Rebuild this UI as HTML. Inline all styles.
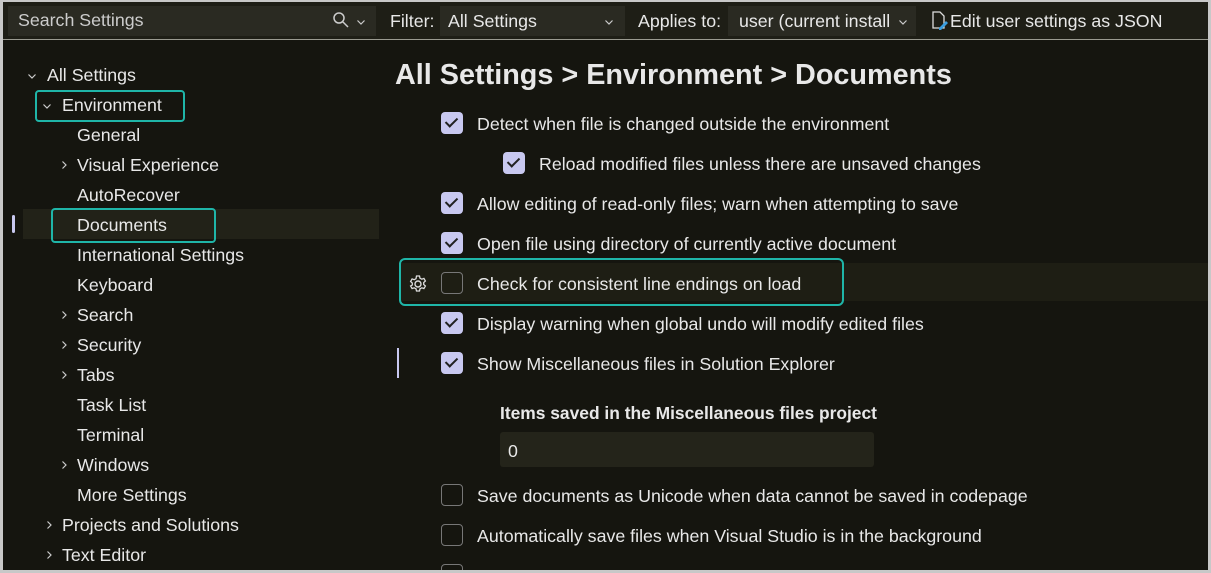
<!DOCTYPE html><html><head><style>
body{margin:0;width:1211px;height:573px;background:#c8c8c8;font-family:"Liberation Sans",sans-serif;overflow:hidden;position:relative;color:#e8e8e8}
.win{position:absolute;left:3px;top:2px;width:1205px;height:568px;background:#15150f;overflow:hidden}
.top{position:absolute;left:0;top:0;width:1205px;height:37px;background:#1e1e16;border-bottom:1px solid #9a9a90}
.box{position:absolute;top:4px;height:30px;background:#2a2a22}
.t{position:absolute;font-size:17.8px;white-space:nowrap}
.dn,.rt{position:absolute;width:10px;height:10px}
.sel{position:absolute;border:2px solid #1fb5a8;border-radius:4px}
.cb{position:absolute;width:22px;height:22px;border-radius:4px;background:#c8c8f0}
.cb::after{content:"";position:absolute;left:7px;top:3px;width:5px;height:10px;border:solid #222;border-width:0 2px 2px 0;transform:rotate(45deg)}
.cb.off{background:transparent;border:1px solid #777;width:22px;height:22px;box-sizing:border-box}
.cb.off::after{display:none}
</style></head><body>
<svg width="0" height="0" style="position:absolute"><defs>
<symbol id="d" viewBox="0 0 10 10"><path d="M1.5 3.5L5 7l3.5-3.5" fill="none" stroke="#ccc" stroke-width="1.2"/></symbol>
<symbol id="r" viewBox="0 0 10 10"><path d="M3.5 1.5L7 5l-3.5 3.5" fill="none" stroke="#ccc" stroke-width="1.2"/></symbol>
</defs></svg>
<div class="win">
<div class="top">
<div class="box" style="left:5px;width:368px"></div>
<div class="t" style="left:15px;top:8px;color:#ccc">Search Settings</div>
<svg style="position:absolute;left:330px;top:10px" width="16" height="16"><circle cx="6" cy="6" r="5" stroke="#ccc" fill="none" stroke-width="1.5"/><line x1="10" y1="10" x2="15" y2="15" stroke="#ccc" stroke-width="1.5"/></svg>
<svg class="dn" style="left:353px;top:15px"><use href="#d"/></svg>
<div class="t" style="left:387px;top:9px">Filter:</div>
<div class="box" style="left:437px;width:185px"></div>
<div class="t" style="left:445px;top:9px">All Settings</div>
<svg class="dn" style="left:601px;top:15px"><use href="#d"/></svg>
<div class="t" style="left:635px;top:9px">Applies to:</div>
<div class="box" style="left:725px;width:188px"></div>
<div class="t" style="left:736px;top:9px;width:150px;overflow:hidden">user (current install</div>
<svg class="dn" style="left:895px;top:15px"><use href="#d"/></svg>
<svg style="position:absolute;left:928px;top:9px" width="18" height="20"><path d="M2 1h7l4 4v12H2z" fill="none" stroke="#ddd" stroke-width="1.3"/><path d="M8 17l7-7 2 2-7 7H8z" fill="#3a9ee0"/></svg>
<div class="t" style="left:947px;top:9px">Edit user settings as JSON</div>
</div>
<!-- tree -->
<svg class="dn" style="left:24px;top:69px"><use href="#d"/></svg><div class="t" style="left:44px;top:63px">All Settings</div>
<div class="sel" style="left:32px;top:88px;width:146px;height:28px"></div>
<svg class="dn" style="left:39px;top:99px"><use href="#d"/></svg><div class="t" style="left:59px;top:93px">Environment</div>
<div class="t" style="left:74px;top:123px">General</div>
<svg class="rt" style="left:56px;top:158px"><use href="#r"/></svg><div class="t" style="left:74px;top:153px">Visual Experience</div>
<div class="t" style="left:74px;top:183px">AutoRecover</div>
<div style="position:absolute;left:20px;top:207px;width:356px;height:30px;background:#222218"></div>
<div style="position:absolute;left:9px;top:213px;width:3px;height:18px;background:#c8c8f0;border-radius:2px"></div>
<div class="sel" style="left:48px;top:206px;width:161px;height:31px"></div>
<div class="t" style="left:74px;top:213px">Documents</div>
<div class="t" style="left:74px;top:243px">International Settings</div>
<div class="t" style="left:74px;top:273px">Keyboard</div>
<svg class="rt" style="left:56px;top:308px"><use href="#r"/></svg><div class="t" style="left:74px;top:303px">Search</div>
<svg class="rt" style="left:56px;top:338px"><use href="#r"/></svg><div class="t" style="left:74px;top:333px">Security</div>
<svg class="rt" style="left:56px;top:368px"><use href="#r"/></svg><div class="t" style="left:74px;top:363px">Tabs</div>
<div class="t" style="left:74px;top:393px">Task List</div>
<div class="t" style="left:74px;top:423px">Terminal</div>
<svg class="rt" style="left:56px;top:458px"><use href="#r"/></svg><div class="t" style="left:74px;top:453px">Windows</div>
<div class="t" style="left:74px;top:483px">More Settings</div>
<svg class="rt" style="left:41px;top:518px"><use href="#r"/></svg><div class="t" style="left:59px;top:513px">Projects and Solutions</div>
<svg class="rt" style="left:41px;top:548px"><use href="#r"/></svg><div class="t" style="left:59px;top:543px">Text Editor</div>
<!-- content -->
<div class="t" style="left:392px;top:57px;font-size:28.8px;font-weight:bold">All Settings &gt; Environment &gt; Documents</div>
<div class="cb" style="left:438px;top:110px"></div><div class="t" style="left:474px;top:112px">Detect when file is changed outside the environment</div>
<div class="cb" style="left:500px;top:150px"></div><div class="t" style="left:536px;top:152px">Reload modified files unless there are unsaved changes</div>
<div class="cb" style="left:438px;top:190px"></div><div class="t" style="left:474px;top:192px">Allow editing of read-only files; warn when attempting to save</div>
<div class="cb" style="left:438px;top:230px"></div><div class="t" style="left:474px;top:232px">Open file using directory of currently active document</div>
<div style="position:absolute;left:396px;top:261px;width:809px;height:38px;background:#1e1e14"></div>
<div class="sel" style="left:396px;top:256px;width:441px;height:44px;border-radius:6px"></div>
<svg style="position:absolute;left:405px;top:272px" width="20" height="20" viewBox="0 0 20 20"><circle cx="10" cy="10" r="3" fill="none" stroke="#ddd" stroke-width="1.4"/><path d="M8.5 2h3l.5 2.2 1.8 1 2.1-.8 1.5 2.6-1.7 1.5v2l1.7 1.5-1.5 2.6-2.1-.8-1.8 1-.5 2.2h-3l-.5-2.2-1.8-1-2.1.8-1.500-2.6L4.3 11V9L2.6 7.5l1.5-2.6 2.1.8 1.8-1z" fill="none" stroke="#ddd" stroke-width="1.3"/></svg>
<div class="cb off" style="left:438px;top:270px"></div><div class="t" style="left:474px;top:272px">Check for consistent line endings on load</div>
<div class="cb" style="left:438px;top:310px"></div><div class="t" style="left:474px;top:312px">Display warning when global undo will modify edited files</div>
<div style="position:absolute;left:394px;top:346px;width:2px;height:30px;background:#c8c8f0"></div>
<div class="cb" style="left:438px;top:350px"></div><div class="t" style="left:474px;top:352px">Show Miscellaneous files in Solution Explorer</div>
<div class="t" style="left:497px;top:401px;font-weight:bold;font-size:17.4px">Items saved in the Miscellaneous files project</div>
<div style="position:absolute;left:497px;top:430px;width:374px;height:35px;background:#24241a;border-radius:3px"></div>
<div class="t" style="left:505px;top:439px">0</div>
<div class="cb off" style="left:438px;top:482px"></div><div class="t" style="left:474px;top:484px">Save documents as Unicode when data cannot be saved in codepage</div>
<div class="cb off" style="left:438px;top:522px"></div><div class="t" style="left:474px;top:524px">Automatically save files when Visual Studio is in the background</div>
<div class="cb off" style="left:438px;top:562px"></div>
</div></body></html>
